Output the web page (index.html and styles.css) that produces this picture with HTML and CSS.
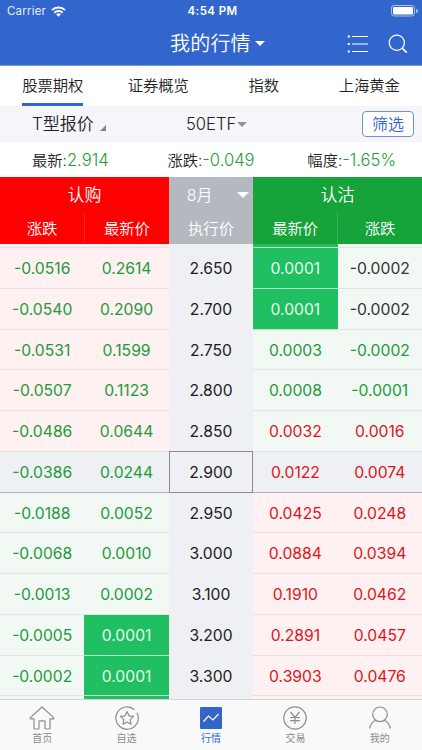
FILE: index.html
```html
<!DOCTYPE html>
<html lang="zh-CN">
<head>
    <meta charset="UTF-8">
    <meta name="viewport" content="width=device-width, initial-scale=1.0">
    <title>我的行情</title>
    <link rel="stylesheet" href="styles.css">
</head>
<body>
    <header>
        <div class="status">
            <div class="carrier">
                <span>Carrier</span>
                <svg width="15" height="11" viewBox="0 0 15 11" fill="none" stroke="#fff" stroke-width="2">
                    <path d="M1 4.1a9.2 9.2 0 0 1 13 0M3.4 6.7a5.8 5.8 0 0 1 8.2 0"/>
                    <path d="M7.5 10.8L5.2 8.5a3.2 3.2 0 0 1 4.6 0z" fill="#fff" stroke="none"/>
                </svg>
            </div>
            <span class="time">4:54 PM</span>
            <div class="battery">
                <svg width="27" height="12" viewBox="0 0 27 12">
                    <rect x=".5" y=".5" width="23" height="10.5" rx="2.5" fill="none" stroke="#a9bfec"/>
                    <rect x="2" y="2" width="20" height="7.5" rx="1" fill="#fff"/>
                    <path d="M25 4a2 2 0 0 1 0 4z" fill="#a9bfec"/>
                </svg>
            </div>
        </div>
        <div class="titlebar">
            <h1>我的行情</h1>
            <i class="arrow"></i>
            <div class="actions">
                <svg width="22" height="20" viewBox="0 0 22 20" stroke="#fff" stroke-width="1.1">
                    <path d="M5 2.5h16M5 10h16M5 17.5h16"/>
                    <path d="M.8 2.5h2M.8 10h2M.8 17.5h2" stroke-width="2"/>
                </svg>
                <svg width="20" height="20" viewBox="0 0 20 20" fill="none" stroke="#fff" stroke-width="1.2">
                    <circle cx="8.8" cy="8.8" r="7.6"/>
                    <path d="M14.4 14.4l4.4 4.2" stroke-width="1.6"/>
                </svg>
            </div>
        </div>
    </header>

    <nav class="tabs">
        <a class="active">股票期权</a>
        <a>证券概览</a>
        <a>指数</a>
        <a>上海黄金</a>
    </nav>

    <div class="filter">
        <div class="mode">T型报价<i class="corner"></i></div>
        <div class="symbol">50ETF<i class="arrow"></i></div>
        <button>筛选</button>
    </div>

    <div class="quote">
        <span>最新:<b>2.914</b></span>
        <span>涨跌:<b>-0.049</b></span>
        <span>幅度:<b>-1.65%</b></span>
    </div>

    <div class="thead">
        <div class="call">
            <h2>认购</h2>
            <div class="cols"><span>涨跌</span><span>最新价</span></div>
        </div>
        <div class="strike">
            <h2>8月<i class="arrow"></i></h2>
            <div class="cols"><span>执行价</span></div>
        </div>
        <div class="put">
            <h2>认沽</h2>
            <div class="cols"><span>最新价</span><span>涨跌</span></div>
        </div>
    </div>

    <main>
        <div class="row in first"><span></span><span></span><span></span><span class="hit"></span><span></span></div>
        <div class="row in"><span>-0.0516</span><span>0.2614</span><span>2.650</span><span class="hit">0.0001</span><span class="flat">-0.0002</span></div>
        <div class="row in"><span>-0.0540</span><span>0.2090</span><span>2.700</span><span class="hit">0.0001</span><span class="flat">-0.0002</span></div>
        <div class="row in"><span>-0.0531</span><span>0.1599</span><span>2.750</span><span>0.0003</span><span>-0.0002</span></div>
        <div class="row in"><span>-0.0507</span><span>0.1123</span><span>2.800</span><span>0.0008</span><span>-0.0001</span></div>
        <div class="row in"><span>-0.0486</span><span>0.0644</span><span>2.850</span><span class="up">0.0032</span><span class="up">0.0016</span></div>
        <div class="row current"><span>-0.0386</span><span>0.0244</span><span>2.900</span><span class="up">0.0122</span><span class="up">0.0074</span></div>
        <div class="row out"><span>-0.0188</span><span>0.0052</span><span>2.950</span><span class="up">0.0425</span><span class="up">0.0248</span></div>
        <div class="row out"><span>-0.0068</span><span>0.0010</span><span>3.000</span><span class="up">0.0884</span><span class="up">0.0394</span></div>
        <div class="row out"><span>-0.0013</span><span>0.0002</span><span>3.100</span><span class="up">0.1910</span><span class="up">0.0462</span></div>
        <div class="row out"><span>-0.0005</span><span class="hit">0.0001</span><span>3.200</span><span class="up">0.2891</span><span class="up">0.0457</span></div>
        <div class="row out"><span>-0.0002</span><span class="hit">0.0001</span><span>3.300</span><span class="up">0.3903</span><span class="up">0.0476</span></div>
        <div class="row out"><span></span><span class="hit"></span><span></span><span></span><span></span></div>
    </main>

    <footer>
        <a>
            <svg width="26" height="24" viewBox="0 0 26 24" fill="none" stroke="#8c8c8f" stroke-width="1.2" stroke-linejoin="round">
                <path d="M13 1L1.3 11.6q-.4 1.2 1 1.2H5v9.4q0 .8.8.8h3.4q.8 0 .8-.8v-6.7q0-.7.7-.7h4.6q.7 0 .7.7v6.7q0 .8.8.8h3.4q.8 0 .8-.8v-9.4h2.700q1.400 0 1-1.200z"/>
            </svg>
            <span>首页</span>
        </a>
        <a>
            <svg width="24" height="24" viewBox="0 0 24 24" fill="none" stroke="#8c8c8f" stroke-width="1.2" stroke-linejoin="round">
                <path d="M19.5 3.7A11.2 11.2 0 1 0 22 6.9"/>
                <path d="M12 5.6l2 4.2 4.5.6-3.3 3.2.8 4.6-4-2.200-4 2.200.8-4.600-3.300-3.200 4.500-.6z"/>
            </svg>
            <span>自选</span>
        </a>
        <a class="active">
            <svg width="22" height="24" viewBox="0 0 22 24" fill="none">
                <rect y="1" width="22" height="22" rx="1" fill="#3366cc"/>
                <path d="M3.5 15.5L8.5 10l4.5 4 5.5-6" stroke="#fff" stroke-width="1.2"/>
            </svg>
            <span>行情</span>
        </a>
        <a>
            <svg width="24" height="24" viewBox="0 0 24 24" fill="none" stroke="#8c8c8f" stroke-width="1.2">
                <circle cx="12" cy="12" r="11.2"/>
                <path d="M7.5 6l4.500 5.500L16.500 6M12 11.500V18M7 11.500h10M7 14.700h10"/>
            </svg>
            <span>交易</span>
        </a>
        <a>
            <svg width="24" height="24" viewBox="0 0 24 24" fill="none" stroke="#8c8c8f" stroke-width="1.2">
                <circle cx="12" cy="8.3" r="7.3"/>
                <path d="M7.5 14.2Q2.300 17 1.700 22.500M16.500 14.200Q21.700 17 22.300 22.500"/>
            </svg>
            <span>我的</span>
        </a>
    </footer>
</body>
</html>
```
FILE: styles.css
```css
* {
    margin: 0;
    padding: 0;
    box-sizing: border-box;
}
body {
    width: 422px;
    height: 750px;
    display: flex;
    flex-direction: column;
    overflow: hidden;
    font-family: Inter, "Noto Sans CJK SC", sans-serif;
    font-size: 16px;
    font-weight: 350;
    color: #222;
    background: #fff;
}
h1, h2, b {
    font-weight: inherit;
}
svg {
    display: block;
}
.arrow {
    width: 0;
    height: 0;
    border: 5px solid transparent;
    border-top-color: currentColor;
    border-bottom: 0;
}

header {
    height: 66px;
    background: #3366cc;
    border-bottom: 1px solid #7595dc;
    color: #fff;
}
.status {
    height: 22px;
    padding: 0 4px 0 7px;
    display: grid;
    grid-template-columns: 1fr auto 1fr;
    align-items: center;
    font-size: 11.5px;
}
.carrier {
    display: flex;
    align-items: center;
    gap: 5px;
    letter-spacing: 0.2px;
    font-weight: 400;
    color: #e6edfa;
}
.time {
    font-weight: 600;
    letter-spacing: 0.4px;
}
.battery {
    display: flex;
    justify-content: flex-end;
}
.titlebar {
    height: 43px;
    padding: 0 14px 0 170px;
    display: flex;
    align-items: center;
}
.titlebar h1 {
    font-size: 20px;
    line-height: 40px;
    letter-spacing: 0.2px;
}
.titlebar .arrow {
    margin-left: 4px;
}
.actions {
    display: flex;
    gap: 19px;
    margin-left: auto;
}

.tabs {
    height: 40px;
    display: grid;
    grid-template-columns: repeat(4, 1fr);
    justify-items: center;
    font-size: 15.3px;
}
.tabs a {
    height: 40px;
    line-height: 40px;
    border-bottom: 3px solid transparent;
}
.tabs .active {
    border-color: #3366cc;
}

.filter {
    height: 36px;
    padding: 0 8px 0 32px;
    display: flex;
    align-items: center;
    background: #f5f5fa;
}
.mode {
    display: flex;
    align-items: center;
    width: 154px;
    font-size: 17px;
    line-height: 36px;
}
.corner {
    margin: 8px 0 0 6px;
    border: 3px solid #858589;
    border-top-color: transparent;
    border-left-color: transparent;
}
.symbol {
    display: flex;
    align-items: center;
    gap: 1px;
    font-size: 16.6px;
}
.symbol .arrow {
    color: #929296;
}
.filter button {
    width: 52px;
    height: 26px;
    margin-left: auto;
    border: 1px solid #6e8fdc;
    border-radius: 4px;
    background: #fff;
    color: #3366cc;
    font: inherit;
    line-height: 24px;
}

.quote {
    height: 35px;
    display: grid;
    grid-template-columns: repeat(3, 1fr);
    text-align: center;
    font-size: 15.3px;
    line-height: 36px;
}
.quote span {
    height: 35px;
}
.quote b {
    font-size: 16.6px;
    color: #1c9c38;
}

.thead {
    height: 67px;
    display: grid;
    grid-template-columns: 2fr 1fr 2fr;
    color: #fff;
    text-align: center;
}
.thead h2 {
    height: 35px;
    font-size: 17px;
    line-height: 36px;
}
.cols {
    display: flex;
    font-size: 15.3px;
    line-height: 34px;
}
.cols span {
    flex: 1;
    height: 32px;
}
.cols span + span {
    border-left: 1px solid rgba(255, 255, 255, 0.15);
}
.call {
    background: #ff0000;
}
.strike {
    background: #b4b9c0;
}
.strike h2 {
    display: flex;
    align-items: center;
    justify-content: space-between;
    padding: 0 4px 0 18px;
    font-size: 16px;
}
.strike .arrow {
    border-width: 6px 6px 0;
}
.put {
    background: #16a339;
}

main {
    height: 455px;
    overflow: hidden;
}
.row {
    height: 41px;
    display: grid;
    grid-template: 100% / repeat(5, 1fr);
    font-size: 15.7px;
    font-weight: 400;
    line-height: 41px;
    text-align: center;
    color: #1d9a3b;
}
.row:nth-child(4n) {
    height: 40px;
}
.row.first {
    height: 4px;
}
.row span {
    border-bottom: 1px solid rgba(205, 205, 205, 0.45);
}
.row span:nth-child(3) {
    background: #eff0f3;
    border-bottom-color: transparent;
    color: #1c1c1e;
}
/* in the money: calls pink, puts green */
.in span:nth-child(-n+2),
.out span:nth-child(n+4) {
    background: #fff0f1;
}
.in span:nth-child(n+4),
.out span:nth-child(-n+2) {
    background: #f2f9f5;
}
.row .up {
    color: #dd1519;
}
.row .flat {
    color: #333;
}
.row span.hit:nth-child(n) {
    background: #20bf61;
    background-clip: padding-box;
    border-bottom-color: #b5e8c8;
    color: #e6fbee;
}
.row.current {
    background: #eff0f3;
    box-shadow: 0 -1px #b4b4b6;
}
.row.current span {
    border-bottom-color: #b4b4b6;
}
.row.current span:nth-child(3) {
    border: 1px solid #8c8c8f;
    border-top: 0;
    box-shadow: 0 -1px #8c8c8f;
}

footer {
    height: 51px;
    padding-top: 6px;
    display: grid;
    grid-template-columns: repeat(5, 1fr);
    border-top: 1px solid #d5d5d7;
    background: #f9f9f9;
    font-size: 10px;
    font-weight: 400;
    line-height: 16px;
    color: #8c8c8f;
}
footer a {
    display: flex;
    flex-direction: column;
    align-items: center;
}
footer .active {
    color: #3366cc;
}
```
